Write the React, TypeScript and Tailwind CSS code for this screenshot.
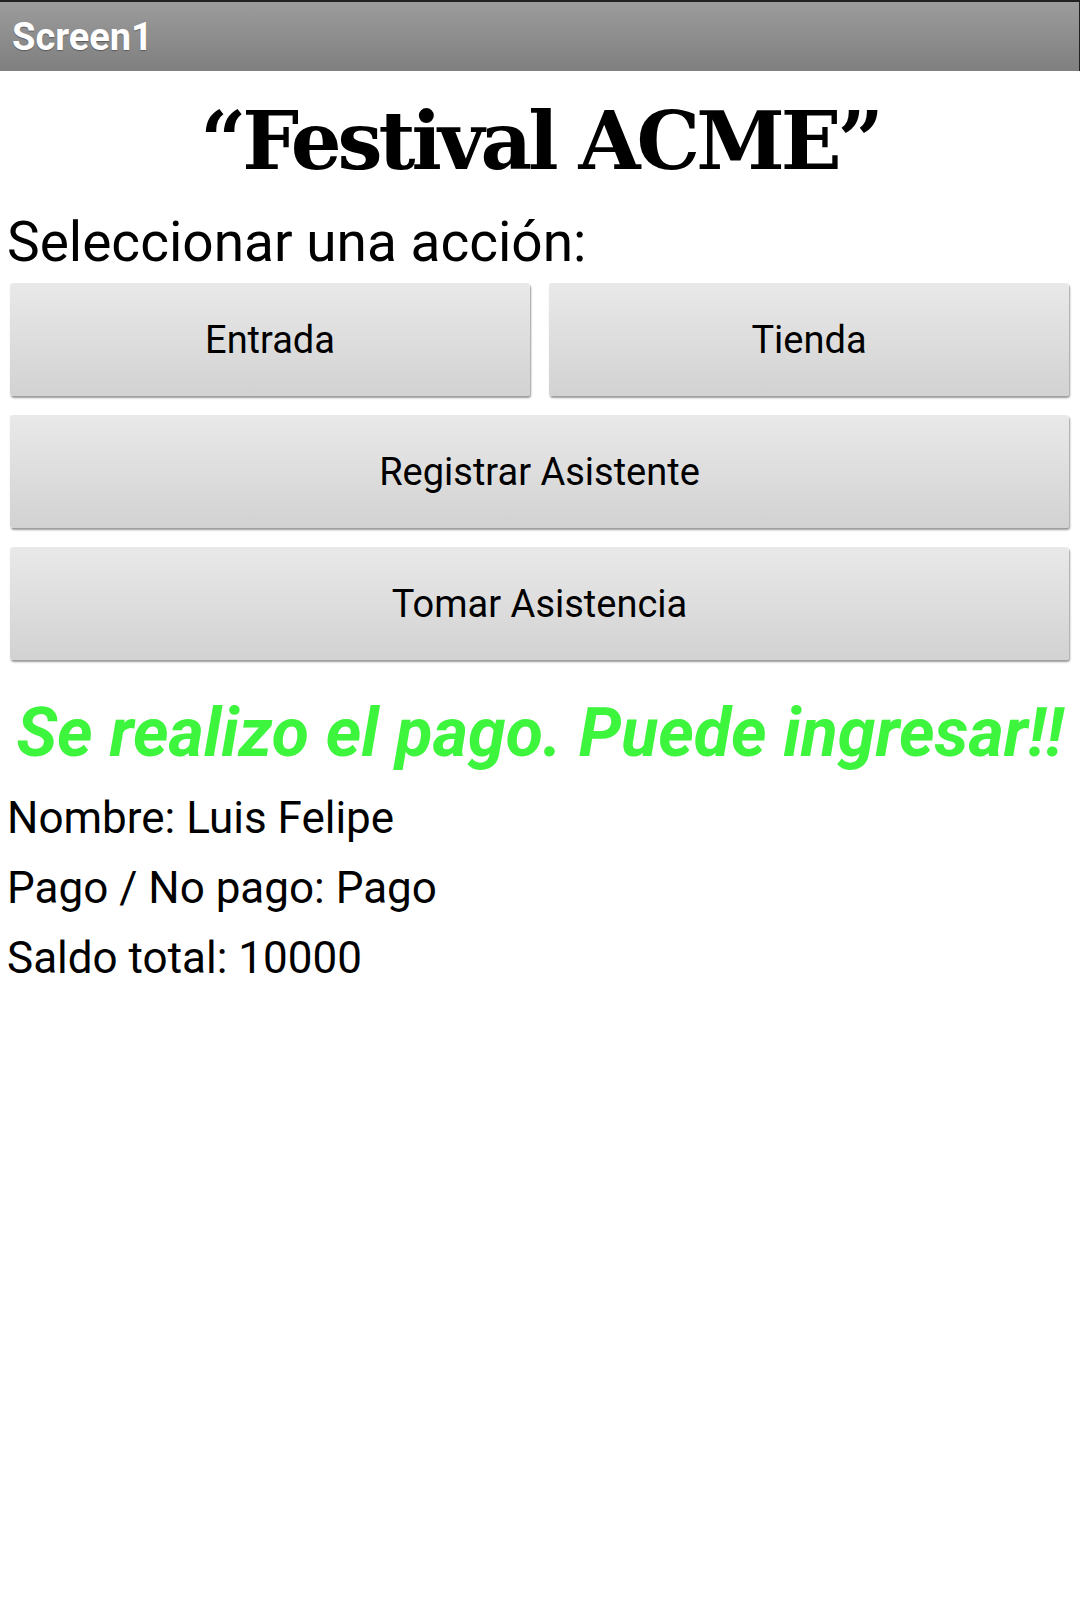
import React from 'react';

const buttonClass =
    'h-[113px] flex items-center justify-center rounded-[3px] bg-linear-to-b from-[#e9e9e9] to-[#d2d2d2] shadow-[1px_2px_2px_rgba(0,0,0,0.4)] text-[38px] leading-none text-black';

export default function App() {
    const info = ['Nombre: Luis Felipe', 'Pago / No pago: Pago', 'Saldo total: 10000'];

    return (
        <div className="min-h-[1599px] w-[1080px] bg-white font-['Roboto',sans-serif]">
            {/* Title bar */}
            <div className="h-[71px] border-t-2 border-r border-[#222] bg-linear-to-b from-[#9c9c9c] to-[#7f7f7f] flex items-center pl-[12px]">
                <span className="text-[38px] font-bold text-white leading-none [text-shadow:0_1px_1px_rgba(0,0,0,0.35)]">
                    Screen1
                </span>
            </div>

            {/* Heading */}
            <h1 className="mt-[30px] h-[80px] text-center text-[80px] leading-[80px] tracking-[-4px] font-bold text-black font-['DejaVu_Serif',serif]">
                “Festival ACME”
            </h1>

            <div className="mt-[33px] h-[56px] pl-[7px] text-[55px] leading-[56px] text-black">
                Seleccionar una acción:
            </div>

            {/* Actions */}
            <div className="mt-[13px] pl-[10px] pr-[11px] flex flex-col gap-[19px]">
                <div className="grid grid-cols-2 gap-[19px]">
                    <button className={buttonClass}>Entrada</button>
                    <button className={buttonClass}>Tienda</button>
                </div>
                <button className={buttonClass}>Registrar Asistente</button>
                <button className={buttonClass}>Tomar Asistencia</button>
            </div>

            {/* Status */}
            <div className="mt-[39px] h-[68px] text-center text-[68px] leading-[68px] font-bold italic text-[#3cf53c] whitespace-nowrap">
                Se realizo el pago. Puede ingresar!!
            </div>

            <div className="mt-[16px] pl-[7px]">
                {info.map((line) => (
                    <div key={line} className="h-[70px] text-[44px] leading-[70px] text-black">
                        {line}
                    </div>
                ))}
            </div>
        </div>
    );
}
